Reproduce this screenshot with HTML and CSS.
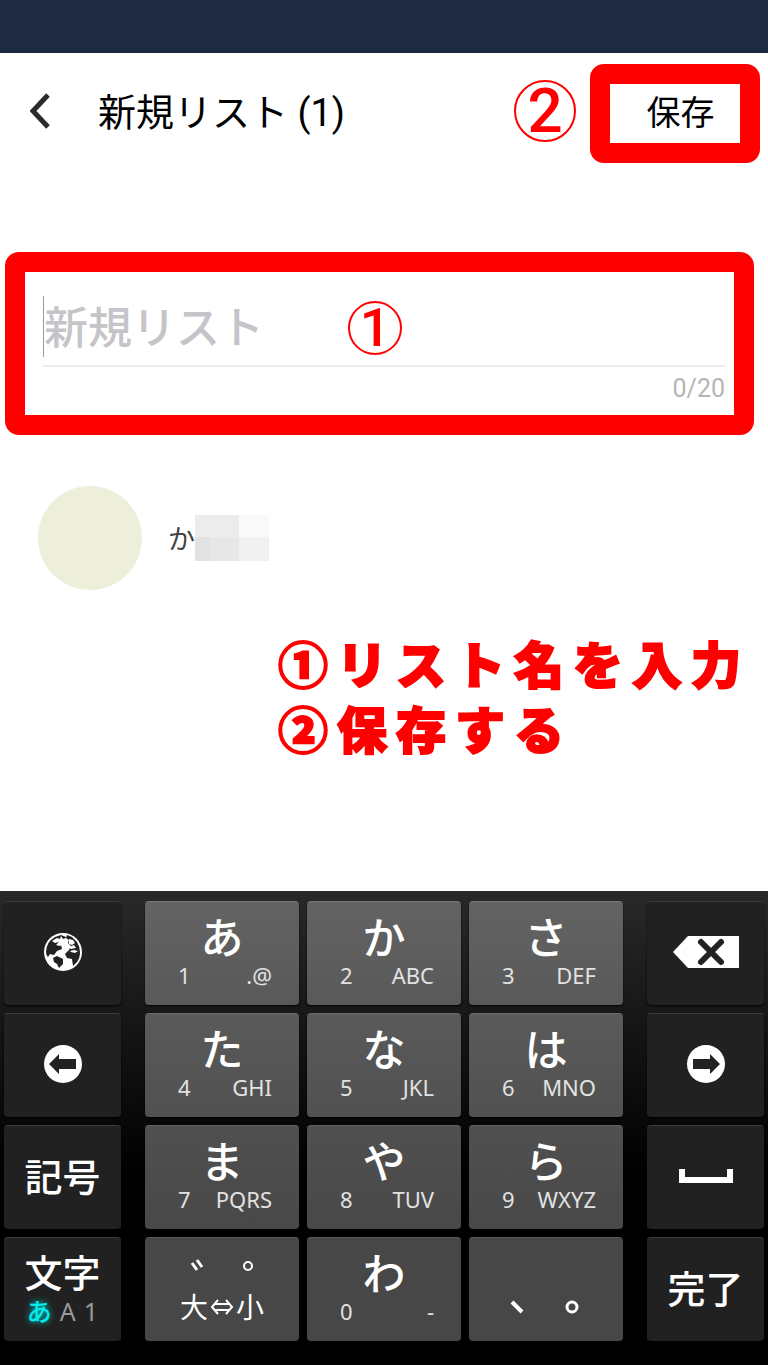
FILE: index.html
```html
<!DOCTYPE html>
<html lang="ja">
<head>
  <meta charset="UTF-8" />
  <meta name="viewport" content="width=device-width, initial-scale=1" />
  <title>新規リスト</title>
  <link rel="stylesheet" href="styles.css">
</head>
<body>
  <div class="status-bar"></div>

  <header class="header">
    <button class="back" type="button" aria-label="戻る">
      <svg width="20" height="36" viewBox="0 0 20 36"><path d="M18 2 3 18l15 16" fill="none" stroke="#2b2b2b" stroke-width="5"/></svg>
    </button>
    <h1 class="title">新規リスト (1)</h1>
    <span class="badge badge-large">2</span>
    <button class="save frame" type="button">保存</button>
  </header>

  <main class="content">
    <section class="name-box frame">
      <div class="field">
        <input class="name-input" type="text" maxlength="20" placeholder="新規リスト" aria-label="リスト名">
      </div>
      <p class="counter">0/20</p>
      <span class="badge badge-over">1</span>
    </section>

    <div class="member">
      <div class="avatar"></div>
      <span class="member-name">か</span>
      <svg class="mosaic" width="74" height="46" viewBox="0 0 74 46" aria-hidden="true">
        <rect width="44" height="22" fill="#ececec"/>
        <rect x="44" width="30" height="22" fill="#f9f9f9"/>
        <rect y="22" width="15" height="24" fill="#e3e3e3"/>
        <rect x="15" y="22" width="29" height="24" fill="#e7e7e7"/>
        <rect x="44" y="22" width="30" height="24" fill="#f1f1f1"/>
      </svg>
    </div>

    <p class="steps">①リスト名を入力<br>②保存する</p>
  </main>

  <div class="keyboard">
    <div class="side">
      <button class="key dark" type="button" aria-label="言語">
        <svg width="38" height="38" viewBox="0 0 38 38">
          <circle cx="19" cy="19" r="19" fill="#fff"/>
          <path d="M2 19Q2 9 11 4l6-2 5 2-2 5-3 3 1 4-5 2-3 4-4-1-2 3Q2 22 2 19z" fill="#222"/>
          <path d="M9 25l4-2 6 3v5l-4 4-2-4-3-2z" fill="#222"/>
          <path d="M23 2l5 2 5 5q3 5 3 10 0 6-3 10l-4 4-1-7-5-1-2-4 4-4 2-4-3-3 1-3-3-2z" fill="#222"/>
          <path d="M8 8l5-3 3 1-1 3-4 1zM17 3l2 3 3-1-1 5-5 3-4-1 3-3zM25 6l4 1 2 3-3 2-3-1zM25 14l5-2 2 3-5 1zM26 18l4-1 4 1-3 2-4-1z" fill="#fff"/>
        </svg>
      </button>
      <button class="key dark" type="button" aria-label="左へ">
        <svg width="38" height="38" viewBox="0 0 38 38"><circle cx="19" cy="19" r="19" fill="#fff"/><path d="M5 19 15 9v5h17v10H15v5z" fill="#222"/></svg>
      </button>
      <button class="key dark" type="button">記号</button>
      <button class="key dark" type="button">
        <span class="mode-title">文字</span>
        <span class="modes"><span class="mode-on">あ</span><span>A</span><span>1</span></span>
      </button>
    </div>

    <div class="pad">
      <button class="key" type="button"><span class="kana">あ</span><span class="sub"><span>1</span><span>.@</span></span></button>
      <button class="key" type="button"><span class="kana">か</span><span class="sub"><span>2</span><span>ABC</span></span></button>
      <button class="key" type="button"><span class="kana">さ</span><span class="sub"><span>3</span><span>DEF</span></span></button>
      <button class="key row-2" type="button"><span class="kana">た</span><span class="sub"><span>4</span><span>GHI</span></span></button>
      <button class="key row-2" type="button"><span class="kana">な</span><span class="sub"><span>5</span><span>JKL</span></span></button>
      <button class="key row-2" type="button"><span class="kana">は</span><span class="sub"><span>6</span><span>MNO</span></span></button>
      <button class="key row-3" type="button"><span class="kana">ま</span><span class="sub"><span>7</span><span>PQRS</span></span></button>
      <button class="key row-3" type="button"><span class="kana">や</span><span class="sub"><span>8</span><span>TUV</span></span></button>
      <button class="key row-3" type="button"><span class="kana">ら</span><span class="sub"><span>9</span><span>WXYZ</span></span></button>
      <button class="key row-4" type="button" aria-label="濁点・半濁点・大小">
        <svg class="marks" width="84" height="20" viewBox="0 0 84 20" fill="none" stroke="#fff" stroke-width="2">
          <path d="m12 6 5 7M17 3l5 7" stroke-width="3"/>
          <circle cx="68" cy="9" r="4"/>
        </svg>
        <span class="resize">大<svg width="24" height="16" viewBox="0 0 24 16" fill="none" stroke="#fff" stroke-width="2"><path d="M8 1 2 8l6 7M16 1l6 7-6 7M5 5h14M5 11h14"/></svg>小</span>
      </button>
      <button class="key row-4" type="button"><span class="kana">わ</span><span class="sub"><span>0</span><span>-</span></span></button>
      <button class="key row-4" type="button" aria-label="句読点">
        <svg class="punct" width="84" height="20" viewBox="0 0 84 20" fill="none" stroke="#fff" stroke-width="3">
          <path d="m8 4 10 10" stroke-width="4"/>
          <circle cx="68" cy="9" r="5"/>
        </svg>
      </button>
    </div>

    <div class="side">
      <button class="key dark" type="button" aria-label="削除">
        <svg width="66" height="32" viewBox="0 0 66 32"><path d="M0 16 15 0h51v32H15z" fill="#fff"/><path d="m28 6 20 20M48 6 28 26" stroke="#222" stroke-width="6" stroke-linecap="round"/></svg>
      </button>
      <button class="key dark" type="button" aria-label="右へ">
        <svg width="38" height="38" viewBox="0 0 38 38"><circle cx="19" cy="19" r="19" fill="#fff"/><path d="M33 19 23 9v5H6v10h17v5z" fill="#222"/></svg>
      </button>
      <button class="key dark" type="button" aria-label="空白">
        <svg width="54" height="14" viewBox="0 0 54 14"><path d="M3 0v11h48V0" fill="none" stroke="#fff" stroke-width="6"/></svg>
      </button>
      <button class="key dark" type="button">完了</button>
    </div>
  </div>
</body>
</html>
```
FILE: styles.css
```css
* {
  margin: 0;
  padding: 0;
  box-sizing: border-box;
}

body {
  min-height: 100vh;
  display: flex;
  flex-direction: column;
  background: #fff;
  color: #000;
  font-family: Roboto, "Noto Sans CJK JP", sans-serif;
}

button {
  border: none;
  background: none;
  color: inherit;
  font-family: inherit;
  cursor: pointer;
}

svg {
  display: block;
}

.status-bar {
  height: 53px;
  background: #1e2a42;
}

.frame {
  border: 20px solid #f00;
  border-radius: 14px;
}

/* header */
.header {
  display: flex;
  align-items: center;
  padding: 11px 8px 0 30px;
}

.back,
.badge-large {
  margin-bottom: 6px;
}

.back {
  width: 68px;
}

.title {
  flex: 1;
  margin-bottom: 2px;
  font-size: 38px;
  line-height: 56px;
  font-weight: 400;
}

.badge {
  display: flex;
  align-items: center;
  justify-content: center;
  width: 54px;
  height: 54px;
  border: 2px solid #f00;
  border-radius: 50%;
  color: #f00;
  font-size: 54px;
  line-height: 56px;
  font-weight: 500;
}

.badge-large {
  width: 62px;
  height: 62px;
  margin-right: 14px;
  font-size: 62px;
}

.save {
  width: 170px;
  height: 99px;
  padding: 0 0 2px 11px;
  font-size: 34px;
  line-height: 50px;
}

/* list name */
.name-box {
  position: relative;
  margin: 89px 14px 0 5px;
  padding: 24px 9px 8px 18px;
}

.field {
  padding-bottom: 8px;
  border-bottom: 2px solid #ececec;
}

.name-input {
  display: block;
  width: 100%;
  height: 61px;
  padding-top: 4px;
  border: none;
  border-left: 1px solid #999;
  outline: none;
  background: none;
  font-family: inherit;
  font-size: 44px;
  font-weight: 500;
}

.name-input::placeholder {
  color: #c4c5c9;
}

.counter {
  color: #b5b5b5;
  font-size: 25px;
  line-height: 36px;
  padding-top: 4px;
  text-align: right;
}

.badge-over {
  position: absolute;
  top: 29px;
  left: 323px;
}

/* member */
.member {
  display: flex;
  align-items: center;
  margin: 51px 38px 0;
}

.avatar {
  width: 104px;
  height: 104px;
  margin-right: 26px;
  border-radius: 50%;
  background: #edefdb;
}

.member-name {
  padding-top: 4px;
  color: #444;
  font-size: 27px;
  line-height: 40px;
}

.steps {
  margin: 40px 0 0 278px;
  color: #f00;
  font-family: "Noto Sans CJK JP", sans-serif;
  font-size: 50px;
  line-height: 65px;
  font-weight: 900;
  letter-spacing: 9px;
  white-space: nowrap;
  -webkit-text-stroke: 2px #f00;
}

/* keyboard */
.keyboard {
  display: flex;
  gap: 24px;
  margin-top: auto;
  padding: 10px 4px 24px;
  background: linear-gradient(#292929, #000 60%);
  color: #fff;
  font-family: "Noto Sans", "Noto Sans CJK JP", sans-serif;
}

.side {
  flex: 117;
  display: flex;
  flex-direction: column;
  gap: 8px;
}

.pad {
  flex: 478;
  display: grid;
  grid-template-columns: repeat(3, 1fr);
  gap: 8px;
}

.key {
  display: flex;
  flex-direction: column;
  align-items: center;
  justify-content: center;
  height: 104px;
  padding-bottom: 3px;
  border-top: 1px solid #777;
  border-radius: 4px;
  background: linear-gradient(#636363, #595959);
  box-shadow: 0 1px 2px #000;
}

.row-2 {
  border-color: #6d6d6d;
  background: linear-gradient(#5a5a5a, #515151);
}

.row-3 {
  border-color: #636363;
  background: linear-gradient(#505050, #484848);
}

.row-4 {
  border-color: #5a5a5a;
  background: #474747;
}

.dark {
  border-color: #3c3c3c;
  background: #212121;
  font-size: 38px;
  line-height: 52px;
  font-weight: 500;
}

.kana {
  font-size: 43px;
  line-height: 46px;
  font-weight: 500;
}

.sub {
  display: flex;
  justify-content: space-between;
  width: 100%;
  padding: 0 27px 0 33px;
  color: #e2e2e2;
  font-size: 22px;
  line-height: 28px;
}

.mode-title {
  line-height: 46px;
}

.modes {
  display: flex;
  gap: 8px;
  color: #999;
  font-size: 25px;
  line-height: 32px;
  font-weight: 400;
}

.mode-on {
  color: #0ee;
  font-weight: 500;
  text-shadow: 0 0 6px #0cc;
}

.marks {
  margin: 8px 0 10px;
}

.resize {
  display: flex;
  align-items: center;
  gap: 2px;
  font-size: 28px;
  line-height: 40px;
}

.punct {
  margin-top: 40px;
}
```
